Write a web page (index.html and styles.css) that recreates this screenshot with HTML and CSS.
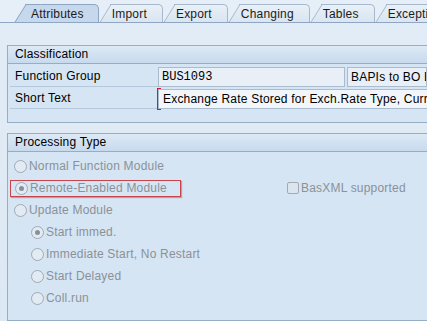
FILE: index.html
```html
<!DOCTYPE html>
<html lang="en">
<head>
    <meta charset="UTF-8">
    <title>Function Module Attributes</title>
    <link rel="stylesheet" href="styles.css">
</head>
<body>

<div class="tabstrip">
    <div class="tab active">Attributes</div>
    <div class="tab">Import</div>
    <div class="tab">Export</div>
    <div class="tab">Changing</div>
    <div class="tab">Tables</div>
    <div class="tab">Exceptions</div>
</div>

<div class="content">
    <div class="group classification">
        <div class="group-title">Classification</div>
        <div class="group-body">
            <div class="field-row">
                <div class="label">Function Group</div>
                <div class="input mono">BUS1093</div>
                <div class="input output">BAPIs to BO ExchangeRate</div>
            </div>
            <div class="field-row">
                <div class="label">Short Text</div>
                <div class="input required wide">Exchange Rate Stored for Exch.Rate Type, Currency Pair, Date</div>
            </div>
        </div>
    </div>

    <div class="group processing">
        <div class="group-title">Processing Type</div>
        <div class="group-body">
            <div class="opt-row">
                <div class="radio"><span class="circle"></span>Normal Function Module</div>
            </div>
            <div class="opt-row">
                <div class="radio marked"><span class="circle checked"></span>Remote-Enabled Module</div>
                <div class="checkbox"><span class="box"></span>BasXML supported</div>
            </div>
            <div class="opt-row">
                <div class="radio"><span class="circle"></span>Update Module</div>
            </div>
            <div class="sub-options">
                <div class="radio"><span class="circle checked"></span>Start immed.</div>
                <div class="radio"><span class="circle"></span>Immediate Start, No Restart</div>
                <div class="radio"><span class="circle"></span>Start Delayed</div>
                <div class="radio"><span class="circle"></span>Coll.run</div>
            </div>
        </div>
    </div>
</div>

</body>
</html>
```

FILE: styles.css
```css
body {
    margin: 0;
    width: 427px;
    height: 321px;
    overflow: hidden;
    font-family: Tahoma, "Liberation Sans", Arial, sans-serif;
    font-size: 12px;
    letter-spacing: 0.2px;
    color: #000;
    background-color: #d5e5f3;
}
.tabstrip {
    display: flex;
    height: 22px;
    padding-left: 3px;
    background-color: #e6eef7;
    border-bottom: 1px solid #8ea6c1;
    overflow: hidden;
}
.tab {
    position: relative;
    z-index: 1;
    flex: none;
    height: 18px;
    margin-top: 4px;
    margin-left: 11px;
    padding: 0 15px 0 2px;
    line-height: 18px;
    color: #1b1b1b;
    background: linear-gradient(#e9f0f7, #d9e5f1);
    border-top: 1px solid #a5b8ce;
    border-right: 1px solid #a5b8ce;
    border-top-right-radius: 5px;
    box-sizing: border-box;
    white-space: nowrap;
}
.tab:first-child {
    margin-left: 22px;
}
.tab::before {
    content: "";
    position: absolute;
    left: -11px;
    top: -1px;
    width: 14px;
    height: 18px;
    background: linear-gradient(#e9f0f7, #d9e5f1);
    border-left: 1px solid #a5b8ce;
    border-top: 1px solid #a5b8ce;
    transform: skewX(-32deg);
    transform-origin: bottom left;
    z-index: -1;
}
.tab.active {
    z-index: 2;
    padding-left: 6px;
    padding-right: 14px;
}
.tab.active,
.tab.active::before {
    background: #c6d8eb;
    border-color: #8ea6c1;
}
.content {
    padding: 22px 0 0 7px;
    background: linear-gradient(#e2ecf6, #dce8f4);
}
.group {
    border: 1px solid #96adc6;
    border-right: none;
    background-color: #d5e5f3;
}
.group-title {
    height: 17px;
    line-height: 17px;
    padding-left: 7px;
    background: linear-gradient(#dde9f5, #c7daed);
    border-bottom: 1px solid #96adc6;
}
.classification {
    margin-bottom: 10px;
}
.classification .group-body {
    padding: 2px 0 12px 2px;
}
.field-row {
    display: flex;
    height: 22px;
    align-items: center;
}
.label {
    flex: none;
    width: 148px;
    height: 20px;
    line-height: 19px;
    padding-left: 5px;
    border-bottom: 1px solid #b5c8dc;
    box-sizing: border-box;
}
.input {
    height: 20px;
    line-height: 18px;
    padding-left: 3px;
    background-color: #e9eff6;
    border: 1px solid #a9bbcf;
    box-sizing: border-box;
    white-space: nowrap;
    overflow: hidden;
}
.mono {
    flex: none;
    width: 187px;
    font-family: "Liberation Mono", "Courier New", monospace;
    font-size: 12px;
    letter-spacing: 0;
    margin-right: 2px;
}
.output {
    flex: 1;
}
.wide {
    flex: 1;
    background-color: #f2f6fa;
}
.required {
    position: relative;
    overflow: visible;
    padding-left: 4px;
}
.required::before {
    content: "";
    position: absolute;
    left: -2px;
    top: -2px;
    width: 3px;
    height: 20px;
    border: 1px solid #c8202a;
    border-right: none;
}
.processing .group-body {
    padding: 3px 0 0 3px;
    height: 165px;
}
.opt-row {
    display: flex;
    height: 22px;
    align-items: center;
}
.radio, .checkbox {
    display: flex;
    align-items: center;
    height: 22px;
    color: #8c9198;
    white-space: nowrap;
}
.circle {
    width: 11px;
    height: 11px;
    border: 1px solid #a2a9b1;
    border-radius: 50%;
    background-color: #e2eaf3;
    margin: 0 2px 0 3px;
    position: relative;
}
.circle.checked::after {
    content: "";
    position: absolute;
    left: 3px;
    top: 3px;
    width: 5px;
    height: 5px;
    border-radius: 50%;
    background-color: #8a9098;
}
.marked {
    width: 171px;
    height: 17px;
    margin-left: -1px;
    padding-left: 1px;
    border: 1px solid #c8434a;
    box-shadow: 1px 1px 1px rgba(0, 0, 0, 0.25);
    box-sizing: border-box;
}
.checkbox {
    margin-left: 106px;
}
.box {
    width: 10px;
    height: 10px;
    border: 1px solid #a2a9b1;
    border-radius: 2px;
    background-color: #dbe5f0;
    margin-right: 2px;
}
.sub-options {
    padding-left: 17px;
}
```
